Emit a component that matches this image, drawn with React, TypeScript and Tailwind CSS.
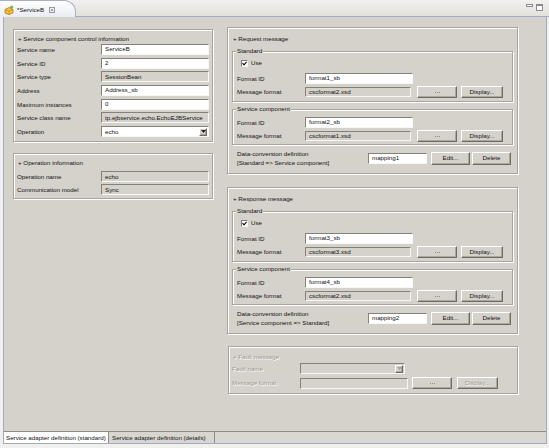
import React from 'react';

const panelBg = 'bg-[#d5d2cb]';
const groupCls = 'border border-[#a9a59d] shadow-[1px_1px_0_#fff,inset_1px_1px_0_#fff]';
const sunken =
  'flex items-center border border-t-[#84817a] border-l-[#84817a] border-b-[#f8f7f4] border-r-[#f8f7f4] pl-[3px] leading-none whitespace-nowrap overflow-hidden';
const raised =
  'flex items-center justify-center border border-t-white border-l-white border-b-[#6e6b65] border-r-[#6e6b65] shadow-[inset_-1px_-1px_0_#aaa69e] bg-[#d5d2cb] leading-none whitespace-nowrap';
const dimText = 'text-[#9d9991] [text-shadow:1px_1px_0_#fff]';

function Field({ value, className, ro }: { value?: string; className: string; ro?: boolean }) {
  return <div className={`${sunken} ${ro ? 'bg-[#d5d2cb]' : 'bg-white'} ${className}`}>{value}</div>;
}

function Btn({ children, className, off }: { children: React.ReactNode; className: string; off?: boolean }) {
  return <div className={`${raised} ${off ? dimText : ''} ${className}`}>{children}</div>;
}

// greyed-out "..." browse button: dots drawn as small squares so they stay visible at this size
function DotsBtn({ className }: { className: string }) {
  return (
    <div className={`${raised} gap-[1px] ${className}`}>
      <span className="w-[1px] h-[1px] bg-[#8f8b83]" />
      <span className="w-[1px] h-[1px] bg-[#8f8b83]" />
      <span className="w-[1px] h-[1px] bg-[#8f8b83]" />
    </div>
  );
}

function Combo({ value, className, off }: { value?: string; className: string; off?: boolean }) {
  return (
    <div className={`${sunken} ${off ? 'bg-[#d5d2cb]' : 'bg-white'} justify-between pr-[1px] ${className}`}>
      <span>{value}</span>
      <div className={`${raised} w-[8px] h-[8px]`}>
        <svg width="5" height="3" viewBox="0 0 5 3">
          <path d="M0 0h5L2.5 3z" fill={off ? '#a6a29a' : '#222'} />
        </svg>
      </div>
    </div>
  );
}

function Check() {
  return (
    <div className="w-[7px] h-[7px] bg-white border border-t-[#7e7b74] border-l-[#7e7b74] border-b-[#f4f3ef] border-r-[#f4f3ef] flex items-center justify-center">
      <svg width="5" height="5" viewBox="0 0 5 5">
        <path d="M0.5 2.2L2 3.8L4.6 0.8" stroke="#111" strokeWidth="1.2" fill="none" />
      </svg>
    </div>
  );
}

function SubGroup({ legend, className, children }: { legend: string; className: string; children: React.ReactNode }) {
  return (
    <div className={`relative ${groupCls} ${className}`}>
      <span className={`absolute -top-[5px] left-[3px] px-[1px] leading-[8px] ${panelBg}`}>{legend}</span>
      {children}
    </div>
  );
}

function FormatRows({ id, fmt }: { id: string; fmt: string }) {
  return (
    <div className="flex flex-col gap-[2px]">
      <div className="flex items-center h-[11px]">
        <span className="w-[68px]">Format ID</span>
        <Field value={id} className="w-[108px] h-[11px]" />
      </div>
      <div className="flex items-center h-[12px]">
        <span className="w-[68px]">Message format</span>
        <Field value={fmt} ro className="w-[106px] h-[10px]" />
        <DotsBtn className="ml-[6px] w-[40px] h-[12px]" />
        <Btn className="ml-[4px] w-[42px] h-[12px]">Display...</Btn>
      </div>
    </div>
  );
}

function MessageGroup(props: {
  title: string;
  std: [string, string];
  svc: [string, string];
  mapping: string;
  conv: string;
  className: string;
}) {
  return (
    <div className={`${groupCls} pt-[7px] pb-[7px] px-[4px] ${props.className}`}>
      <div className="h-[8px] leading-[8px] ml-[1px]">+ {props.title}</div>
      <SubGroup legend="Standard" className="mt-[8px] pt-[7px] pb-[3px] pl-[4px]">
        <div className="flex items-center h-[8px] ml-[4px] gap-[3px]">
          <Check />
          <span>Use</span>
        </div>
        <div className="mt-[6px]">
          <FormatRows id={props.std[0]} fmt={props.std[1]} />
        </div>
      </SubGroup>
      <SubGroup legend="Service component" className="mt-[7px] pt-[7px] pb-[2px] pl-[4px]">
        <FormatRows id={props.svc[0]} fmt={props.svc[1]} />
      </SubGroup>
      <div className="mt-[5px] ml-[5px] flex items-center h-[16px]">
        <div className="w-[131px] leading-[9px]">
          Data-conversion definition
          <br />
          {props.conv}
        </div>
        <Field value={props.mapping} className="w-[59px] h-[11px]" />
        <Btn className="ml-[4px] w-[39px] h-[13px]">Edit...</Btn>
        <Btn className="ml-[2px] w-[39px] h-[13px]">Delete</Btn>
      </div>
    </div>
  );
}

const controlRows: { label: string; value: string; kind?: 'ro' | 'combo' }[] = [
  { label: 'Service name', value: 'ServiceB' },
  { label: 'Service ID', value: '2' },
  { label: 'Service type', value: 'SessionBean', kind: 'ro' },
  { label: 'Address', value: 'Address_sb' },
  { label: 'Maximum instances', value: '0' },
  { label: 'Service class name', value: 'tp.ejbservice.echo.EchoEJBService', kind: 'ro' },
  { label: 'Operation', value: 'echo', kind: 'combo' },
];

export default function App() {
  return (
    <div className="w-[549px] h-[448px] bg-[#f1f0ec] font-['Liberation_Sans',Arial,sans-serif] text-[6.2px] text-[#111] overflow-hidden">
      {/* editor tab strip */}
      <div className="flex h-[17px] bg-gradient-to-b from-[#f2f1ee] to-[#e2e0da]">
        <div className="flex items-center w-[76px] h-[17px] pl-[4px] pt-[1px] rounded-tr-[12px] border-t border-r border-[#a7afc2] bg-gradient-to-b from-white to-[#e9ecf2]">
          <svg width="10" height="10" viewBox="0 0 10 10">
            <path d="M1 4.5L5 2.5L9 4.5V8L5 9.5L1 8Z" fill="#f5c43a" stroke="#b77a12" strokeWidth="0.8" />
            <path d="M1 4.5L5 6.3L9 4.5M5 6.3V9.5" stroke="#b77a12" strokeWidth="0.6" fill="none" />
            <circle cx="7.6" cy="2.2" r="1.6" fill="#7fb44a" />
          </svg>
          <span className="ml-[3px]">*ServiceB</span>
          <svg className="ml-[5px]" width="6" height="6" viewBox="0 0 6 6">
            <rect x="0.5" y="0.5" width="5" height="5" fill="none" stroke="#9a9a9a" />
            <path d="M1.8 1.8L4.2 4.2M4.2 1.8L1.8 4.2" stroke="#8a8a8a" strokeWidth="0.8" />
          </svg>
        </div>
        <div className="flex-1 flex justify-end items-start gap-[3px] pr-[6px] pt-[4px] border-b border-[#9eabc6]">
          <div className="w-[7px] h-[3px] border border-[#8a8a8a] bg-white" />
          <div className="w-[7px] h-[7px] border border-[#8a8a8a] border-t-2 bg-white" />
        </div>
      </div>

      {/* editor body */}
      <div className="ml-[3px] w-[544px] border-x border-b border-[#9eabc6]">
        <div className={`h-[415px] ${panelBg} border-b border-[#8e8b84] flex pl-[9px] pt-[10px] gap-[14px]`}>
          <div className="w-[200px] pt-[2px]">
            <div className={`${groupCls} pt-[5px] pb-[4px] px-[3px]`}>
              <div className="h-[8px] leading-[8px] ml-[1px]">+ Service component control information</div>
              <div className="mt-[1px] flex flex-col gap-[2.7px]">
                {controlRows.map((r) => (
                  <div key={r.label} className="flex items-center h-[11px]">
                    <span className="w-[84px]">{r.label}</span>
                    {r.kind === 'combo' ? (
                      <Combo value={r.value} className="w-[108px] h-[11px]" />
                    ) : (
                      <Field value={r.value} ro={r.kind === 'ro'} className="w-[108px] h-[11px]" />
                    )}
                  </div>
                ))}
              </div>
            </div>

            <div className={`mt-[11px] ${groupCls} pt-[5px] pb-[3px] px-[3px]`}>
              <div className="h-[8px] leading-[8px] ml-[1px]">+ Operation information</div>
              <div className="mt-[4px] flex flex-col gap-[2px]">
                <div className="flex items-center h-[11px]">
                  <span className="w-[84px]">Operation name</span>
                  <Field value="echo" ro className="w-[108px] h-[11px]" />
                </div>
                <div className="flex items-center h-[11px]">
                  <span className="w-[84px]">Communication model</span>
                  <Field value="Sync" ro className="w-[108px] h-[11px]" />
                </div>
              </div>
            </div>
          </div>

          <div className="w-[291px]">
            <MessageGroup
              title="Request message"
              std={['format1_sb', 'cscformat2.xsd']}
              svc={['format2_sb', 'cscformat1.xsd']}
              mapping="mapping1"
              conv="[Standard => Service component]"
              className=""
            />
            <MessageGroup
              title="Response message"
              std={['format3_sb', 'cscformat3.xsd']}
              svc={['format4_sb', 'cscformat2.xsd']}
              mapping="mapping2"
              conv="[Service component => Standard]"
              className="mt-[13px]"
            />

            <div className={`mt-[12px] ml-[1px] ${groupCls} pt-[6px] pb-[4px] px-[3px] ${dimText}`}>
              <div className="h-[8px] leading-[8px] ml-[1px]">+ Fault message</div>
              <div className="mt-[2px] flex flex-col gap-[3px]">
                <div className="flex items-center h-[11px]">
                  <span className="w-[68px]">Fault name</span>
                  <Combo off className="w-[105px] h-[11px]" />
                </div>
                <div className="flex items-center h-[12px]">
                  <span className="w-[68px]">Message format</span>
                  <Field ro className="w-[108px] h-[11px]" />
                  <DotsBtn className="ml-[4px] w-[40px] h-[12px]" />
                  <Btn off className="ml-[5px] w-[41px] h-[12px]">Display...</Btn>
                </div>
              </div>
            </div>
          </div>
        </div>

        {/* bottom page tabs */}
        <div className="flex h-[11px] bg-[#dad7d0]">
          <div className="w-[105px] bg-white flex items-center pl-[2px] border-r border-[#8e8b84]">
            Service adapter definition (standard)
          </div>
          <div className="w-[106px] flex items-center pl-[3px] border-r border-[#8e8b84] bg-[#d9d6cf]">
            Service adapter definition (details)
          </div>
        </div>
      </div>
    </div>
  );
}
